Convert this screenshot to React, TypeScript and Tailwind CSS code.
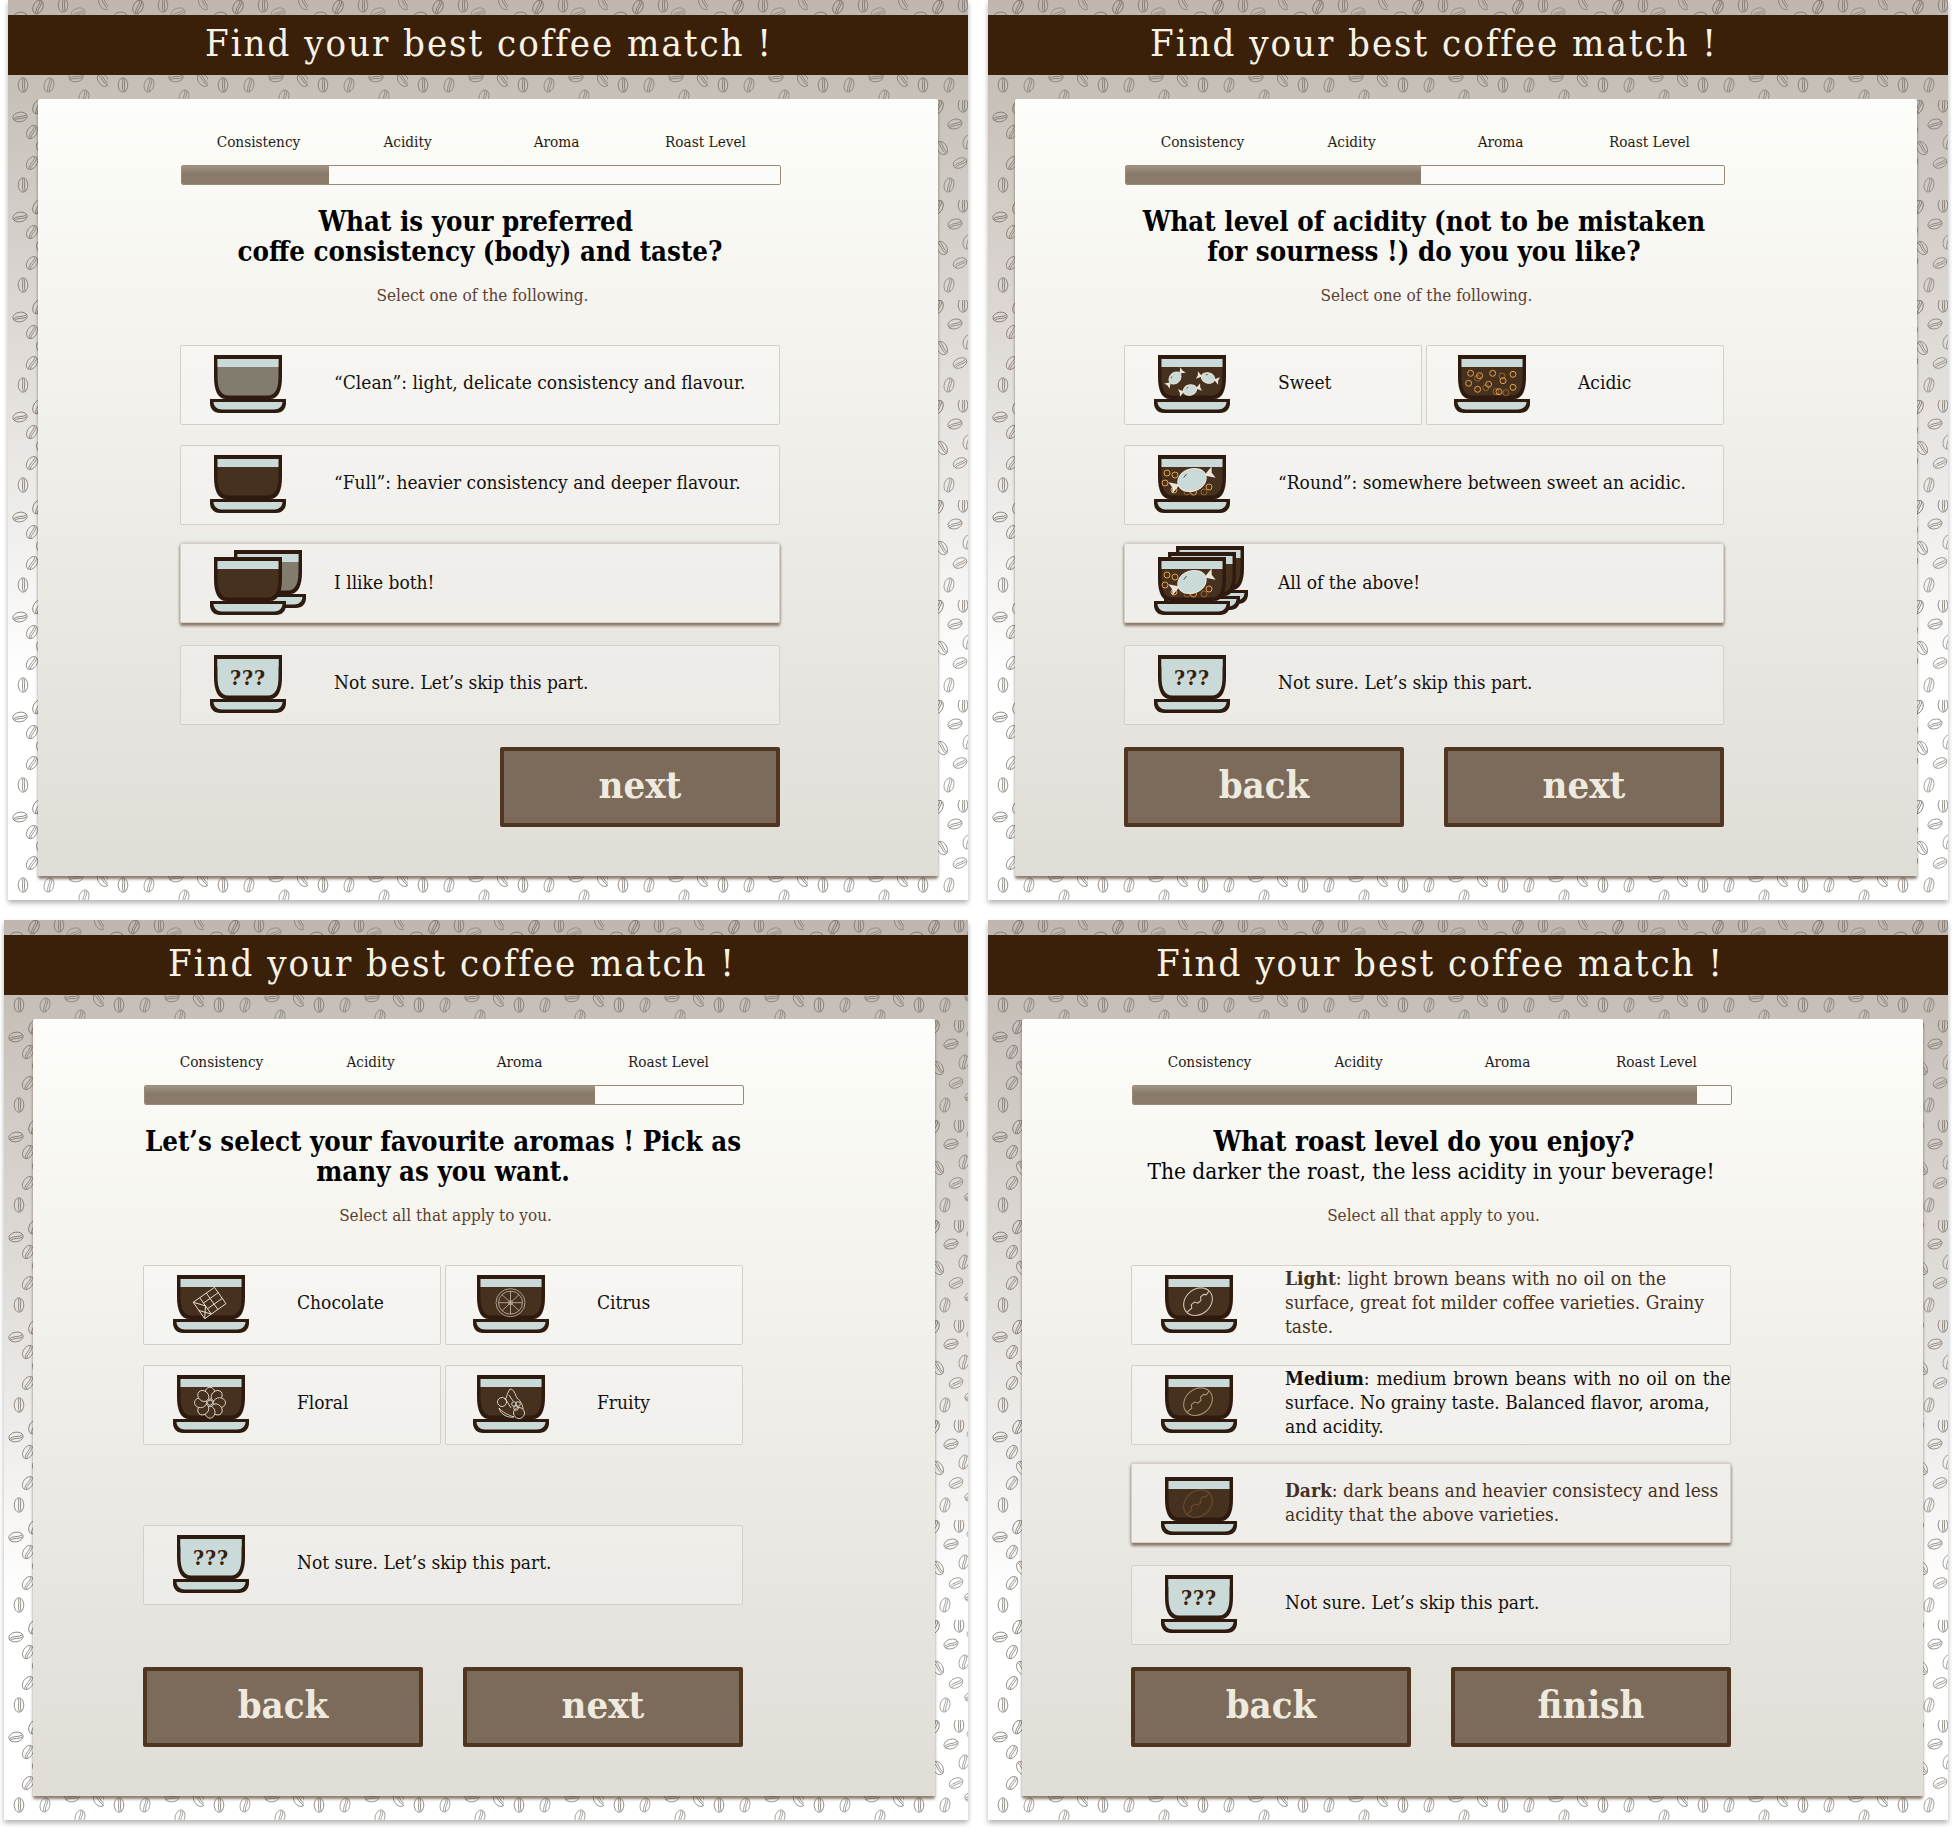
import React from "react";

const LIGHT = "#c9dad9";
const DARK = "#2e1a0e";
const COFFEE = "#46301e";
const CREAM = "#e9e4d8";

const BEANS: [number, number, number, number][] = [
  [30, 7, 25, 1], [55, 5, 0, 1], [96, 3, -30, 0.8], [70, 13, 70, 0.7], [12, 17, 80, 1], [24, 32, 30, 0.9],
  [47, 24, 75, 0.9], [34, 48, -30, 0.9], [60, 42, 15, 0.8], [24, 63, 35, 0.9], [52, 63, 65, 0.8],
  [15, 85, 0, 1], [41, 85, 15, 0.8], [68, 77, 85, 0.9], [95, 80, -35, 0.9], [76, 97, 15, 0.8],
];

function BeanPattern({ id }: { id: string }) {
  return (
    <svg className="absolute inset-0 h-full w-full" aria-hidden="true">
      <defs>
        <pattern id={id} width="100" height="100" patternUnits="userSpaceOnUse">
          {BEANS.map(([x, y, r, o], i) => (
            <g key={i} transform={`translate(${x} ${y}) rotate(${r})`} opacity={o} fill="none" stroke="#746c65" strokeWidth="0.75">
              <ellipse rx="4.8" ry="7.2" />
              <path d="M-1 -6.5 C1 -3 -2 3 0.6 6.5 M1 -6.5 C3 -3 0 3 2.4 6.5" />
            </g>
          ))}
        </pattern>
      </defs>
      <rect width="100%" height="100%" fill={`url(#${id})`} />
    </svg>
  );
}

function Candy({ x, y, r }: { x: number; y: number; r: number }) {
  return (
    <g transform={`translate(${x} ${y}) rotate(${r})`}>
      <path d="M-6 0 L-11.5 -3.8 L-10.5 0 L-11.5 3.8 Z M6 0 L11.5 -3.8 L10.5 0 L11.5 3.8 Z" fill={CREAM} />
      <ellipse rx="6.8" ry="5.2" fill={LIGHT} stroke={CREAM} strokeWidth="1" />
      <path d="M-3 -2.5 L-1 -3.3" stroke="#5c4a3a" strokeWidth="0.8" />
    </g>
  );
}

function BigCandy() {
  return (
    <g transform="translate(38 25) rotate(-20)">
      <path d="M-13 0 L-23 -6 L-21 0 L-23 6 Z M13 0 L23 -6 L21 0 L23 6 Z" fill={CREAM} />
      <ellipse rx="14.5" ry="11" fill={LIGHT} stroke={CREAM} strokeWidth="1.2" />
      <path d="M-7 -5 L-3 -7.5" stroke="#5c4a3a" strokeWidth="0.9" />
    </g>
  );
}

function Rings({ list }: { list: [number, number, number?][] }) {
  return (
    <g fill="none" stroke="#e8a04a" strokeWidth="1">
      {list.map(([x, y, o], i) => (
        <circle key={i} cx={x} cy={y} r="3" opacity={o ?? 1} />
      ))}
    </g>
  );
}

function Cup({ fill = COFFEE, children }: { fill?: string; children?: React.ReactNode }) {
  return (
    <g>
      <path d="M4 0 H72 V22 C72 36 68 44 60 44 H16 C8 44 4 36 4 22 Z" fill={DARK} />
      <path d="M7.5 4 H68.5 V22 C68.5 34 65 40.5 58 40.5 H18 C11 40.5 7.5 34 7.5 22 Z" fill={fill} />
      <rect x="7.5" y="4" width="61" height="8" fill={LIGHT} />
      {children}
      <path d="M0 44 H76 V48 C76 54 72 58 66 58 H10 C4 58 0 54 0 48 Z" fill={DARK} />
      <path d="M3.5 47 H72.5 C72.5 51 69 54.5 64 54.5 H12 C7 54.5 3.5 51 3.5 47 Z" fill={LIGHT} />
    </g>
  );
}

const ACID: [number, number, number?][] = [
  [16.6, 18.3], [25.6, 20.7], [23.6, 23.3, 0.45], [38.7, 18.3], [48, 21, 0.45], [49, 25.7], [59, 19.3], [14.6, 28.3],
  [34.6, 29.3], [31.8, 32.7, 0.45], [23.6, 34.3], [42, 36.7, 0.5], [45, 36.7], [52, 37.7, 0.45], [59, 32.3],
];
const ROUND: [number, number, number?][] = [
  [13, 18], [21, 20], [11, 28], [20, 35], [39.5, 37], [50, 37, 0.45], [55, 32], [33, 37, 0.45],
];

function Round() {
  return (
    <>
      <Rings list={ROUND} />
      <BigCandy />
    </>
  );
}

function Bean({ color }: { color: string }) {
  return (
    <g transform="translate(37 26.7) rotate(-40)" fill="none" stroke={color} strokeWidth="1.1">
      <ellipse rx="15.5" ry="12.5" />
      <path d="M-15 1 L-9 1 L-7 -2 L-3 -2 L-1 1 L3 1 L5 -2 L9 -2 L11 0 L15 -1" />
    </g>
  );
}

function Inner({ kind }: { kind: string }) {
  const line = { fill: "none", stroke: "#e5e0d2", strokeWidth: 0.9 };
  if (kind === "sweet")
    return (
      <>
        <Candy x={21} y={23} r={-45} />
        <Candy x={54} y={23} r={15} />
        <Candy x={36} y={35} r={-15} />
      </>
    );
  if (kind === "acid") return <Rings list={ACID} />;
  if (kind === "round") return <Round />;
  if (kind === "choc")
    return (
      <g transform="translate(36.6 28) rotate(-35)" {...line}>
        <rect x="-13" y="-10" width="26" height="20" />
        <path d="M-5 -10 V10 M3 -10 V10 M-5 -3.5 H13 M-5 3.5 H13 M-13 -10 L-5 0 L-13 10 M-13 0 L-5 10" />
      </g>
    );
  if (kind === "citrus")
    return (
      <g transform="translate(37.5 27.7)" fill="none" stroke="#b7ab99" strokeWidth="0.9">
        <ellipse rx="14.5" ry="14" />
        <ellipse rx="12" ry="11.5" />
        <circle r="2" />
        <path d="M0 -11.5 V11.5 M-12 0 H12 M-8.5 -8 L8.5 8 M-8.5 8 L8.5 -8" />
      </g>
    );
  if (kind === "floral")
    return (
      <g transform="translate(37 27.7)" {...line}>
        {[0, 45, 90, 135, 180, 225, 270, 315].map((a) => (
          <ellipse key={a} cx="0" cy="-9.5" rx="5" ry="6" transform={`rotate(${a})`} fill={COFFEE} />
        ))}
        <circle r="2.6" fill={COFFEE} />
      </g>
    );
  if (kind === "fruity")
    return (
      <g transform="translate(38 28)" {...line}>
        <path d="M-1 -14 C3 -14 4 -9 6 -5 C10 -2 12 3 12 6 M-1 -14 C-4 -10 -4 -6 -6 -3" />
        <path d="M-12 5 C-10 12 -3 15 3 14 C-3 12 -9 9 -12 5 Z" />
        <circle cx="-9" cy="-1" r="4.5" />
        <circle cx="8" cy="10" r="5.5" />
        <circle cx="3" cy="1" r="2.3" />
        <circle cx="7" cy="1" r="2.3" />
        <circle cx="5" cy="5" r="2.3" />
        <path d="M-6 -5 L0 5 M-2 -8 L2 -2" />
      </g>
    );
  if (kind === "light") return <Bean color="#cfc3ad" />;
  if (kind === "medium") return <Bean color="#a98f6e" />;
  if (kind === "dark") return <Bean color="#6d4c2e" />;
  return null;
}

function Icon({ kind }: { kind: string }) {
  if (kind === "both")
    return (
      <svg width="76" height="58" viewBox="0 0 76 58" className="overflow-visible" aria-hidden="true">
        <g transform="translate(20 -7)">
          <Cup fill="#817c6e" />
        </g>
        <Cup />
      </svg>
    );
  if (kind === "all")
    return (
      <svg width="76" height="58" viewBox="0 0 76 58" className="overflow-visible" aria-hidden="true">
        <g transform="translate(18 -11)">
          <Cup />
        </g>
        <g transform="translate(10 -5)">
          <Cup />
        </g>
        <Cup>
          <Round />
        </Cup>
      </svg>
    );
  if (kind === "unsure")
    return (
      <svg width="76" height="58" viewBox="0 0 76 58" aria-hidden="true">
        <Cup fill={LIGHT}>
          <text x="38" y="30" textAnchor="middle" fontSize="21" fontWeight="700" fill="#3a2009" letterSpacing="1">???</text>
        </Cup>
      </svg>
    );
  if (kind === "clean" || kind === "full")
    return (
      <svg width="76" height="58" viewBox="0 0 76 58" aria-hidden="true">
        <Cup fill={kind === "clean" ? "#817c6e" : COFFEE} />
      </svg>
    );
  return (
    <svg width="76" height="58" viewBox="0 0 76 58" aria-hidden="true">
      <Cup>
        <Inner kind={kind} />
      </Cup>
    </svg>
  );
}

function Option({
  kind,
  selected,
  half,
  right,
  className = "",
  children,
}: {
  kind: string;
  selected?: boolean;
  half?: boolean;
  right?: boolean;
  className?: string;
  children: React.ReactNode;
}) {
  return (
    <div
      className={`flex h-20 rounded-[2px] border border-[#d6cfc7] bg-[#ffffff40] ${right ? "pl-[27px]" : "pl-[29px]"} ${half ? "w-[298px]" : "w-[600px]"} ${selected ? "shadow-[0_3px_3px_#8a7a6a,0_0_3px_#b5aca2]" : ""} ${className}`}
    >
      <div className={`w-[76px] shrink-0 ${selected ? "pt-[13px]" : "pt-[9px]"}`}>
        <Icon kind={kind} />
      </div>
      <div className={`ml-[48px] flex items-center whitespace-nowrap text-[19px] leading-6 text-[#14100c] ${selected ? "pb-[3px]" : "pb-[6px]"}`}>
        <div>{children}</div>
      </div>
    </div>
  );
}

function Steps({ fillClass }: { fillClass: string }) {
  return (
    <>
      <div className="ml-[4px] flex h-5 items-center text-[15.2px] text-[#1f1a15]">
        <span className="w-[150px] text-center">Consistency</span>
        <span className="w-[150px] text-center">Acidity</span>
        <span className="w-[150px] text-center">Aroma</span>
        <span className="w-[150px] text-center">Roast Level</span>
      </div>
      <div className="ml-[1px] mt-[13px] h-5 w-[600px] overflow-hidden rounded-[2px] border border-[#9a8a7a] bg-[#fbfbf7]">
        <div className={`h-full bg-gradient-to-b from-[#a29585] to-[#8a7a6a] to-[40%] ${fillClass}`} />
      </div>
    </>
  );
}

function Button({ label }: { label: string }) {
  return (
    <div className="flex h-20 w-[280px] items-center justify-center rounded-[2px] border-4 border-[#4f3621] bg-[#7c6b5a] pb-[6px] text-[38px] font-bold text-[#efeadf]">
      {label}
    </div>
  );
}

function Panel({
  id,
  panelClass,
  titleClass,
  cardClass,
  bodyClass,
  children,
}: {
  id: string;
  panelClass: string;
  titleClass: string;
  cardClass: string;
  bodyClass: string;
  children: React.ReactNode;
}) {
  return (
    <section className={`relative h-[900px] overflow-visible bg-gradient-to-b from-[#bfb7af] to-white to-[76%] shadow-[0_3px_5px_rgba(0,0,0,0.3)] ${panelClass}`}>
      <BeanPattern id={id} />
      <div className="relative pt-[15px]">
        <header className="h-[60px] bg-[#3a2009]">
          <h1 className={`w-[616px] whitespace-nowrap text-center text-[38px] font-normal leading-[56px] tracking-[1.95px] text-[#f6f3e6] ${titleClass}`}>
            Find your best coffee match !
          </h1>
        </header>
        <div className={`mt-6 h-[777px] rounded-[2px] bg-gradient-to-b from-[#fdfdf9] to-[#e0ddd7] pt-[33px] shadow-[0_3px_3px_rgba(90,70,50,0.7)] ${cardClass}`}>
          <div className={`w-[600px] ${bodyClass}`}>{children}</div>
        </div>
      </div>
    </section>
  );
}

function Heading({ children }: { children: React.ReactNode }) {
  return <h2 className="mt-[21px] whitespace-nowrap text-center text-[27.4px] font-bold leading-[30px] text-black">{children}</h2>;
}

function Sub({ children }: { children: React.ReactNode }) {
  return <p className="mt-[17px] pl-[5px] text-center text-[17px] leading-6 text-[#5a4030]">{children}</p>;
}

export default function App() {
  return (
    <div className="h-[1828px] w-[1952px] bg-white font-['DejaVu_Serif_Condensed','Liberation_Serif',serif] [font-stretch:condensed]">
      <div className="grid grid-cols-[968px_960px] gap-x-5 gap-y-5">
        <Panel id="p1" panelClass="ml-2" titleClass="ml-[173px]" cardClass="ml-[30px] w-[900px]" bodyClass="ml-[142px]">
          <Steps fillClass="w-[24.6%]" />
          <Heading>What is your preferred&nbsp;<br />coffe consistency (body) and taste?</Heading>
          <Sub>Select one of the following.</Sub>
          <div className="mt-[38px]">
            <Option kind="clean">“Clean”: light, delicate consistency and flavour.</Option>
            <Option kind="full" className="mt-5">“Full”: heavier consistency and deeper flavour.</Option>
            <Option kind="both" selected className="mt-[18px]">I llike both!</Option>
            <Option kind="unsure" className="mt-[22px]">Not sure. Let’s skip this part.</Option>
          </div>
          <div className="mt-[22px] flex justify-end"><Button label="next" /></div>
        </Panel>

        <Panel id="p2" panelClass="" titleClass="ml-[138px]" cardClass="ml-[27px] w-[902px]" bodyClass="ml-[109px]">
          <Steps fillClass="w-[49.3%]" />
          <Heading>What level of acidity (not to be mistaken<br />for sourness !) do you you like?</Heading>
          <Sub>Select one of the following.</Sub>
          <div className="mt-[38px]">
            <div className="flex gap-1">
              <Option kind="sweet" half>Sweet</Option>
              <Option kind="acid" half right>Acidic</Option>
            </div>
            <Option kind="round" className="mt-5">“Round”: somewhere between sweet an acidic.</Option>
            <Option kind="all" selected className="mt-[18px]">All of the above!</Option>
            <Option kind="unsure" className="mt-[22px]">Not sure. Let’s skip this part.</Option>
          </div>
          <div className="mt-[22px] flex justify-between"><Button label="back" /><Button label="next" /></div>
        </Panel>

        <Panel id="p3" panelClass="ml-1" titleClass="ml-[140px]" cardClass="ml-[29px] w-[902px]" bodyClass="ml-[110px]">
          <Steps fillClass="w-[75.2%]" />
          <Heading>Let’s select your favourite aromas ! Pick as<br />many as you want.</Heading>
          <Sub>Select all that apply to you.</Sub>
          <div className="mt-[38px]">
            <div className="flex gap-1">
              <Option kind="choc" half>Chocolate</Option>
              <Option kind="citrus" half right>Citrus</Option>
            </div>
            <div className="mt-5 flex gap-1">
              <Option kind="floral" half>Floral</Option>
              <Option kind="fruity" half right>Fruity</Option>
            </div>
            <Option kind="unsure" className="mt-20">Not sure. Let’s skip this part.</Option>
          </div>
          <div className="mt-[62px] flex justify-between"><Button label="back" /><Button label="next" /></div>
        </Panel>

        <Panel id="p4" panelClass="" titleClass="ml-[144px]" cardClass="ml-[34px] w-[901px]" bodyClass="ml-[109px]">
          <Steps fillClass="w-[94.3%]" />
          <div className="mt-[21px] whitespace-nowrap text-center leading-[30px] text-black">
            <h2 className="h-[30px] pr-[14px] text-[27.4px] font-bold">What roast level do you enjoy?</h2>
            <p className="h-[30px] text-[22.5px]">The darker the roast, the less acidity in your beverage!</p>
          </div>
          <Sub>Select all that apply to you.</Sub>
          <div className="mt-[38px]">
            <Option kind="light"><span className="text-[#46301e]"><span className="[word-spacing:0.7px]"><b>Light</b>: light brown beans with no oil on the</span><br />surface, great fot milder coffee varieties. Grainy<br />taste.</span></Option>
            <Option kind="medium" className="mt-5"><span className="[word-spacing:1.5px]"><b>Medium</b>: medium brown beans with no oil on the</span><br />surface. No grainy taste. Balanced flavor, aroma,<br />and acidity.</Option>
            <Option kind="dark" selected className="mt-[18px]"><span className="text-[#46301e]"><b>Dark</b>: dark beans and heavier consistecy and less<br />acidity that the above varieties.</span></Option>
            <Option kind="unsure" className="mt-[22px]">Not sure. Let’s skip this part.</Option>
          </div>
          <div className="mt-[22px] flex justify-between"><Button label="back" /><Button label="finish" /></div>
        </Panel>
      </div>
    </div>
  );
}
